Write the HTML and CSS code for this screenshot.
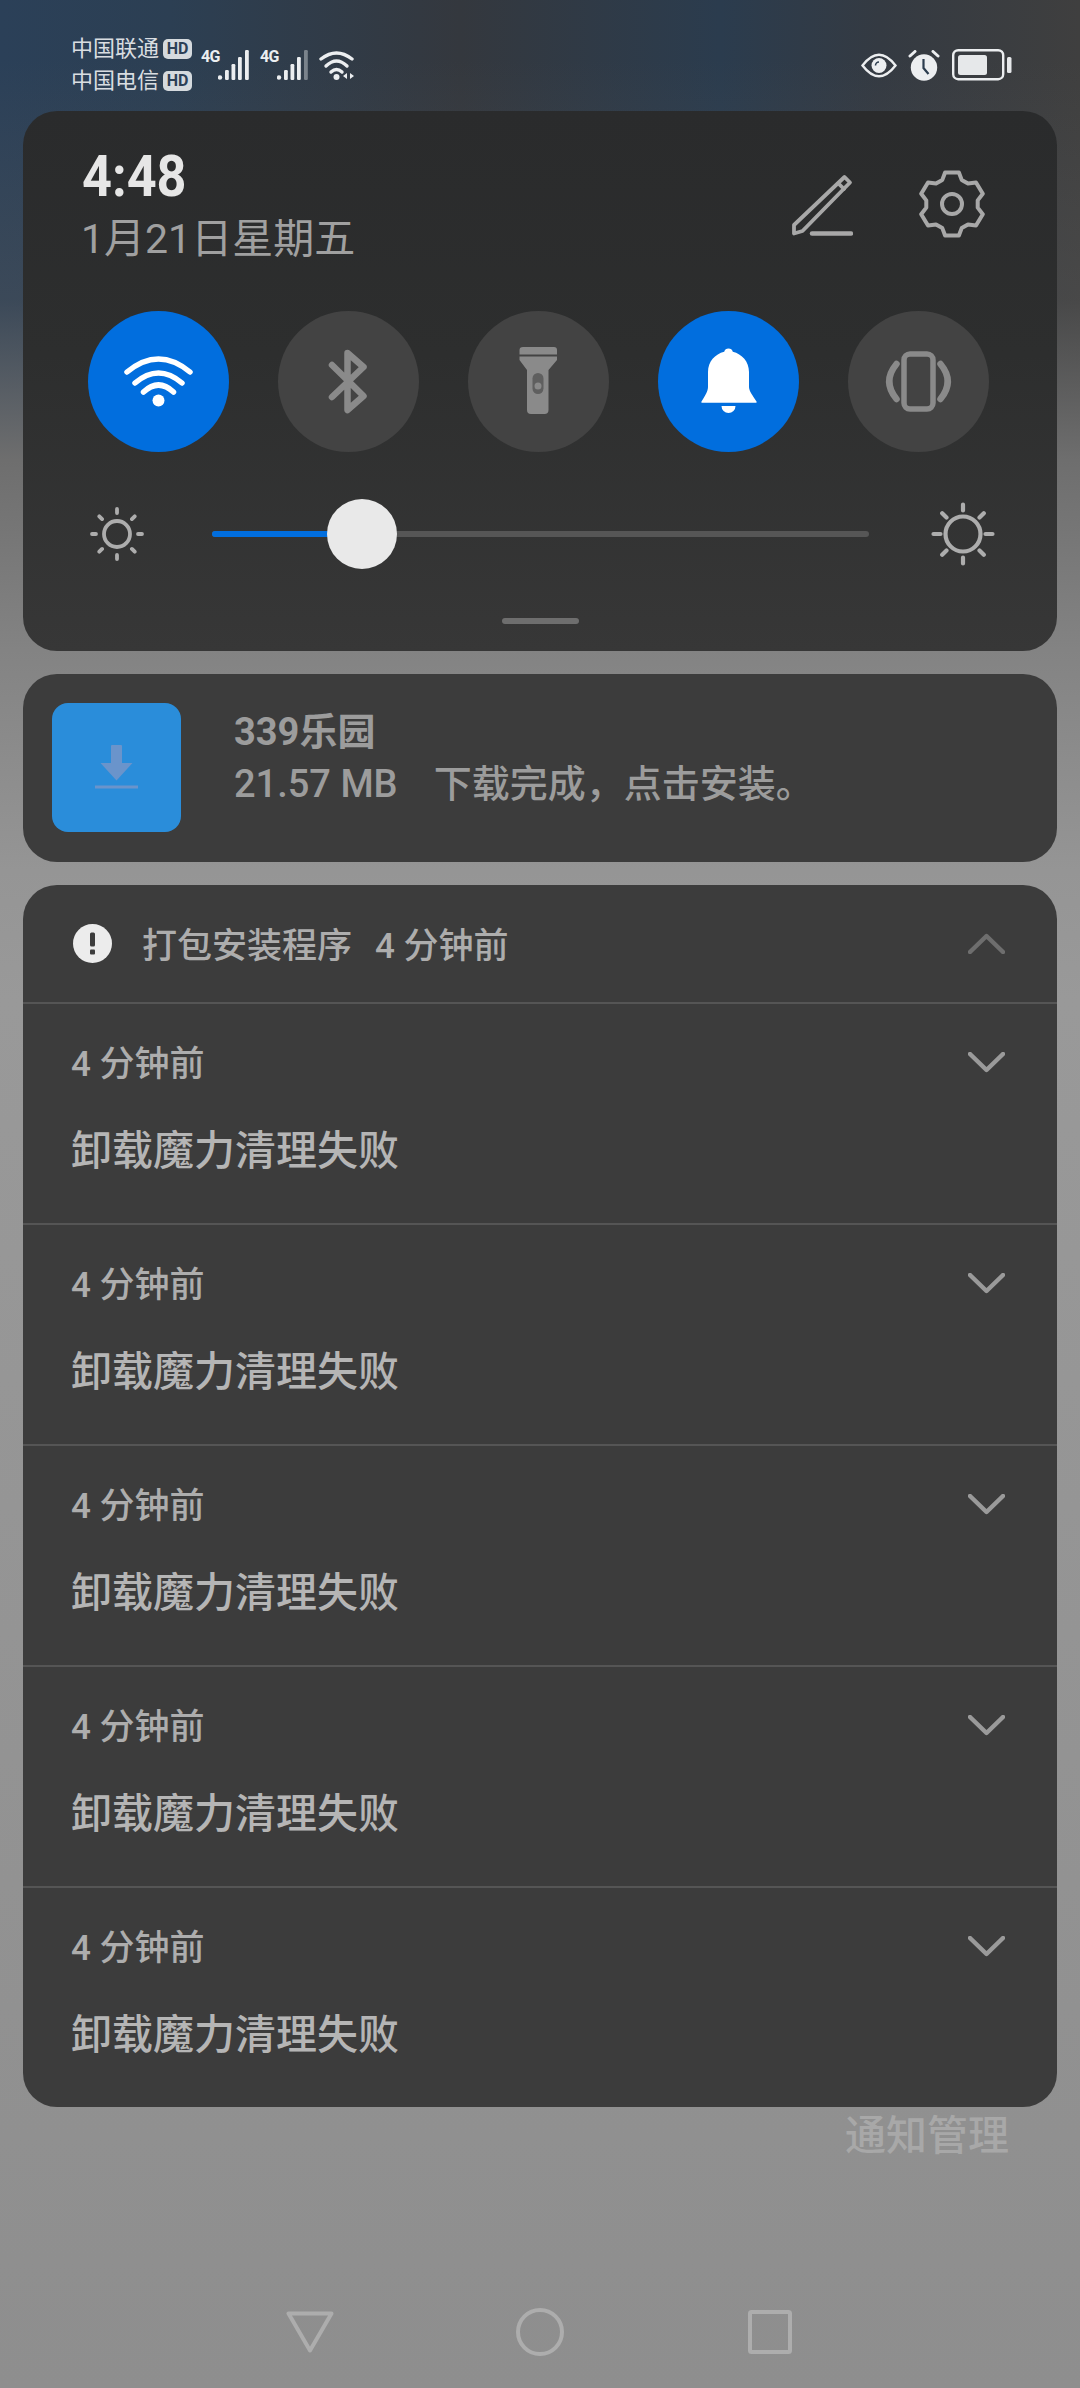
FILE: index.html

```html
<!DOCTYPE html>
<html lang="zh-CN">
<head>
  <meta charset="UTF-8" />
  <meta name="viewport" content="width=device-width, initial-scale=1.0"/>
  <title>通知中心</title>
  <link rel="stylesheet" href="styles.css">
</head>
<body>
  <div class="page">
    <div class="status">
      <div class="carriers">
        <div class="carrier">中国联通<span class="hd">HD</span></div>
        <div class="carrier">中国电信<span class="hd">HD</span></div>
      </div>
      <div class="net">
        <span class="net-label">4G</span>
        <svg class="bars" viewBox="0 0 31 30"><circle cx="2" cy="27.500" r="2.200"/><rect x="7" y="20" width="3.800" height="10" rx="1.200"/><rect x="13.500" y="14" width="3.800" height="16" rx="1.200"/><rect x="20" y="7" width="3.800" height="23" rx="1.200"/><rect x="27" y="0" width="3.800" height="30" rx="1.200"/></svg>
      </div>
      <div class="net">
        <span class="net-label">4G</span>
        <svg class="bars" viewBox="0 0 31 30"><circle cx="2" cy="27.500" r="2.200"/><rect x="7" y="20" width="3.800" height="10" rx="1.200"/><rect x="13.500" y="14" width="3.800" height="16" rx="1.200"/><rect x="20" y="7" width="3.800" height="23" rx="1.200"/><rect x="27" y="0" width="3.800" height="30" rx="1.200" opacity=".4"/></svg>
      </div>
      <svg class="wifi-small" viewBox="0 0 37 31" fill="none" stroke="#eceef0" stroke-width="3.400" stroke-linecap="round">
        <path d="M2 9Q17.500 -3 33 9"/><path d="M7 16Q17.500 6 28 16"/><path d="M12 22Q17.500 17 23 22"/>
        <circle cx="17.500" cy="27" r="3" fill="#eceef0" stroke="none"/>
        <path d="M28 23v6l-4-3zM31 23v6l4-3z" fill="#eceef0" stroke="none"/>
      </svg>
      <div class="status-right">
        <svg class="eye" viewBox="0 0 36 27" fill="none" stroke="#eceef0" stroke-width="2.400">
          <path d="M1.500 13.500Q18 -8 34.500 13.500Q18 35 1.500 13.500Z"/>
          <circle cx="18" cy="13.500" r="7.500" fill="#eceef0" stroke="none"/>
          <path d="M14.500 13.500a3.500 3.500 0 0 1 3.500-3.500" stroke="#2c3d4f" stroke-width="1.600"/>
        </svg>
        <svg class="alarm" viewBox="0 0 32 31" fill="none">
          <circle cx="16" cy="17.500" r="13.200" fill="#eceef0"/>
          <path d="M15.500 9v9l5 6" stroke="#2c3d4f" stroke-width="2.200"/>
          <path d="M2 6l5-4.500M30 6l-5-4.500" stroke="#eceef0" stroke-width="3" stroke-linecap="round"/>
        </svg>
        <svg class="battery" viewBox="0 0 60 32">
          <rect x="1.200" y="1.200" width="50" height="29" rx="5" fill="none" stroke="#eceef0" stroke-width="2.400"/>
          <rect x="6" y="6" width="29" height="20" rx="2.500" fill="#e6e8ea"/>
          <rect x="55" y="8" width="4.500" height="16" rx="1.500" fill="#e6e8ea"/>
        </svg>
      </div>
    </div>

    <div class="panel">
      <div class="panel-head">
        <div>
          <div class="clock">4:48</div>
          <div class="date">1月21日星期五</div>
        </div>
        <div class="panel-actions">
          <svg class="pencil" viewBox="0 0 62 62" fill="none" stroke="#a8a8a8" stroke-width="3.800" stroke-linejoin="round" stroke-linecap="round">
            <path d="M53.500 3L59 8.500L11.500 57L3 59.500L3 51Z"/>
            <path d="M47.500 9.500L53 15"/>
            <path d="M21 59.500H60" stroke-width="4.500"/>
          </svg>
          <svg class="gear" viewBox="0 0 66 68" fill="none" stroke="#a8a8a8" stroke-width="4" stroke-linejoin="round">
            <path d="M23.300 9.900L26.100 2.500H39.900L42.700 9.900L49 13.500L57 12.500L63.800 23.800L58.700 30.400V37.600L63.800 44.200L57 55.500L49 54.500L42.700 58.100L39.900 65.500H26.100L23.300 58.100L17 54.500L9 55.500L2.200 44.200L7.300 37.600V30.400L2.200 23.800L9 12.500L17 13.500Z"/>
            <circle cx="33" cy="34" r="10"/>
          </svg>
        </div>
      </div>

      <div class="toggles">
        <div class="toggle on">
          <svg viewBox="0 0 141 141" fill="none" stroke="#fff" stroke-width="5.500" stroke-linecap="round">
            <path d="M39 61Q70.500 35 102 61"/><path d="M47 72Q70.500 52 94 72"/><path d="M55.500 81Q70.500 67 85.500 81"/>
            <circle cx="70.500" cy="89.500" r="6" fill="#fff" stroke="none"/>
          </svg>
        </div>
        <div class="toggle">
          <svg viewBox="0 0 141 141" fill="none" stroke="#8a8a8a" stroke-width="6.500" stroke-linecap="round" stroke-linejoin="round">
            <path d="M54 54L85.500 85L69.500 99V42L85.500 56L54 86"/>
          </svg>
        </div>
        <div class="toggle">
          <svg viewBox="0 0 141 141">
            <path d="M55 36H86a3 3 0 0 1 3 3V43.500H51.500V39a3.500 3 0 0 1 3.500-3z" fill="#8a8a8a"/>
            <path d="M51.500 45.500H89V49L80.500 59V99a4 4 0 0 1-4 4H63a4 4 0 0 1-4-4V59L51.500 49z" fill="#8a8a8a"/>
            <rect x="64.500" y="62" width="11" height="21" rx="5.500" fill="#5f5f5f"/>
            <circle cx="70" cy="75" r="3.500" fill="#8a8a8a"/>
          </svg>
        </div>
        <div class="toggle on">
          <svg viewBox="0 0 141 141" fill="#fff">
            <path d="M70.500 37.500a4.500 4.500 0 0 1 4.300 3.200C84 43 91 50.500 91 61v15c0 4 4 9 7.500 14.500.4.700 0 1.300-.8 1.300H44.300c-.8 0-1.200-.6-.8-1.300C47 85 50 80 50 76V61c0-10.500 7-18 16.200-20.300a4.500 4.500 0 0 1 4.300-3.200z"/>
            <path d="M63.500 95h14a7 7 0 0 1-14 0z"/>
          </svg>
        </div>
        <div class="toggle">
          <svg viewBox="0 0 141 141" fill="none" stroke="#8a8a8a" stroke-width="5.500" stroke-linecap="round">
            <rect x="56" y="43" width="29" height="55" rx="6"/>
            <path d="M48.500 53Q34 70.500 48.500 88" stroke-width="6.500"/><path d="M92.500 53Q107 70.500 92.500 88" stroke-width="6.500"/>
          </svg>
        </div>
      </div>

      <div class="brightness">
        <svg class="sun-low" viewBox="0 0 54 54" fill="none" stroke="#adadad" stroke-width="3.800" stroke-linecap="round">
          <circle cx="27" cy="27" r="13"/>
          <path d="M27 2v4M27 48v4M2 27h4M48 27h4M9.300 9.300l2.800 2.800M41.900 41.900l2.800 2.800M9.300 44.700l2.800-2.800M41.900 12.100l2.800-2.800"/>
        </svg>
        <div class="track">
          <div class="track-fill" style="width: 22.8%"></div>
          <div class="thumb" style="left: 22.8%"></div>
        </div>
        <svg class="sun-high" viewBox="0 0 64 64" fill="none" stroke="#adadad" stroke-width="4.200" stroke-linecap="round">
          <circle cx="32" cy="32" r="17.500"/>
          <path d="M32 2.500v6M32 55.500v6M2.500 32h7M54.500 32h7M11.200 11.200l4.300 4.300M48.500 48.500l4.300 4.300M11.200 52.800l4.300-4.300M48.500 15.500l4.300-4.300"/>
        </svg>
      </div>
      <div class="handle"></div>
    </div>

    <div class="card download">
      <div class="app-icon">
        <svg viewBox="0 0 129 129" fill="#6a94cb">
          <path d="M60 42h9a1 1 0 0 1 1 1V60h10.500L64.500 77.500L48.500 60H59V43a1 1 0 0 1 1-1z"/>
          <rect x="43" y="82.500" width="43" height="3"/>
        </svg>
      </div>
      <div class="download-text">
        <div class="download-title">339乐园</div>
        <div class="download-sub"><span class="size">21.57 MB</span>下载完成，点击安装。</div>
      </div>
    </div>

    <div class="card group">
      <div class="group-head">
        <svg class="alert" viewBox="0 0 39 39">
          <circle cx="19.500" cy="19.500" r="19.500" fill="#ececec"/>
          <rect x="17" y="8.500" width="5" height="14" rx="1.500" fill="#3c3c3c"/>
          <rect x="17" y="25.500" width="5" height="5" rx="1" fill="#3c3c3c"/>
        </svg>
        <span class="group-title">打包安装程序</span>
        <span class="group-time">4 分钟前</span>
        <svg class="chevron dim" viewBox="0 0 37 21" fill="none"><path d="M2 19L18.500 3L35 19"/></svg>
      </div>

      <div class="item">
        <div class="item-top">
          <span class="item-time">4 分钟前</span>
          <svg class="chevron" viewBox="0 0 37 21" fill="none"><path d="M2 2L18.500 18L35 2"/></svg>
        </div>
        <div class="item-title">卸载魔力清理失败</div>
      </div>
      <div class="item">
        <div class="item-top">
          <span class="item-time">4 分钟前</span>
          <svg class="chevron" viewBox="0 0 37 21" fill="none"><path d="M2 2L18.500 18L35 2"/></svg>
        </div>
        <div class="item-title">卸载魔力清理失败</div>
      </div>
      <div class="item">
        <div class="item-top">
          <span class="item-time">4 分钟前</span>
          <svg class="chevron" viewBox="0 0 37 21" fill="none"><path d="M2 2L18.500 18L35 2"/></svg>
        </div>
        <div class="item-title">卸载魔力清理失败</div>
      </div>
      <div class="item">
        <div class="item-top">
          <span class="item-time">4 分钟前</span>
          <svg class="chevron" viewBox="0 0 37 21" fill="none"><path d="M2 2L18.500 18L35 2"/></svg>
        </div>
        <div class="item-title">卸载魔力清理失败</div>
      </div>
      <div class="item">
        <div class="item-top">
          <span class="item-time">4 分钟前</span>
          <svg class="chevron" viewBox="0 0 37 21" fill="none"><path d="M2 2L18.500 18L35 2"/></svg>
        </div>
        <div class="item-title">卸载魔力清理失败</div>
      </div>
    </div>

    <div class="manage">通知管理</div>

    <div class="nav">
      <svg viewBox="0 0 48 42" fill="none" stroke="#adadad" stroke-width="4" stroke-linejoin="round"><path d="M2.500 2.500H45.500L24 39.500Z"/></svg>
      <svg viewBox="0 0 48 48" fill="none" stroke="#adadad" stroke-width="4"><circle cx="24" cy="24" r="22"/></svg>
      <svg viewBox="0 0 44 44" fill="none" stroke="#adadad" stroke-width="4" stroke-linejoin="round"><rect x="2" y="2" width="40" height="40" rx="1.500"/></svg>
    </div>
  </div>
</body>
</html>
```

FILE: styles.css

```css
* {
  box-sizing: border-box;
}
body {
  margin: 0;
  font-family: Roboto, "Noto Sans CJK SC", sans-serif;
}
svg {
  display: block;
}
.page {
  width: 1080px;
  height: 2388px;
  overflow: hidden;
  display: flex;
  flex-direction: column;
  background:
    linear-gradient(180deg, rgba(110, 110, 110, 0) 60px, rgba(90, 90, 90, .35) 300px, #6e6e6e 460px, #838383 650px, #959595 870px, #999 1000px, #8e8e8e 2388px),
    linear-gradient(90deg, #2b4058 0, #2c3f53 170px, #34383e 460px, #2b3c4e 720px, #343a42 880px, #3f3f3f 1080px);
}

/* status bar */
.status {
  height: 111px;
  flex: none;
  display: flex;
  align-items: center;
  padding: 19px 68px 0 71px;
  color: #d9dde1;
}
.carrier {
  display: flex;
  align-items: center;
  height: 32px;
  font-size: 22px;
  line-height: 32px;
}
.hd {
  margin-left: 4px;
  width: 29px;
  height: 20px;
  border-radius: 5px;
  background: #d5dade;
  color: #2c4056;
  font-size: 16px;
  font-weight: 700;
  line-height: 20px;
  text-align: center;
}
.net {
  position: relative;
  width: 48px;
  margin-left: 9px;
  height: 30px;
}
.net + .net {
  margin-left: 11px;
}
.net-label {
  position: absolute;
  left: 0;
  top: -1px;
  font-size: 16px;
  font-weight: 700;
  line-height: 16px;
  letter-spacing: -.8px;
  color: #eceef0;
}
.bars {
  position: absolute;
  left: 17px;
  top: 0;
  width: 31px;
  height: 30px;
  fill: #eceef0;
}
.wifi-small {
  width: 37px;
  height: 31px;
  margin-left: 11px;
}
.status-right {
  margin-left: auto;
  display: flex;
  align-items: center;
}
.eye {
  width: 36px;
  height: 27px;
}
.alarm {
  width: 32px;
  height: 31px;
  margin-left: 11px;
}
.battery {
  width: 60px;
  height: 32px;
  margin-left: 12px;
}

/* quick settings */
.panel {
  flex: none;
  height: 540px;
  margin: 0 23px;
  padding-top: 35px;
  border-radius: 34px;
  background: linear-gradient(180deg, #2a2b2c 0, #2d2e2e 45%, #373737 100%);
}
.panel-head {
  display: flex;
  justify-content: space-between;
  height: 119px;
  padding: 0 72px 0 59px;
}
.clock {
  font-size: 58px;
  font-weight: 700;
  line-height: 60px;
  color: #e6e6e6;
  transform: scaleX(.9);
  transform-origin: left center;
}
.date {
  margin: 8px 0 0 -1px;
  font-size: 41px;
  line-height: 50px;
  color: #a0a0a0;
}
.panel-actions {
  display: flex;
  gap: 66px;
  padding-top: 24px;
}
.pencil {
  width: 62px;
  height: 62px;
  margin-top: 4px;
}
.gear {
  width: 66px;
  height: 68px;
}
.toggles {
  display: flex;
  gap: 49px;
  padding: 0 64.5px;
  margin-top: 46px;
}
.toggle {
  width: 141px;
  height: 141px;
  border-radius: 50%;
  background: #434343;
}
.toggle.on {
  background: #016ede;
}
.brightness {
  display: flex;
  align-items: center;
  gap: 68px;
  height: 70px;
  margin-top: 47px;
  padding: 0 62px 0 67px;
}
.sun-low {
  width: 54px;
  height: 54px;
  flex: none;
}
.sun-high {
  width: 64px;
  height: 64px;
  flex: none;
  margin-left: -6px;
}
.track {
  position: relative;
  flex: 1;
  height: 6px;
  border-radius: 3px;
  background: #565656;
}
.track-fill {
  height: 6px;
  border-radius: 3px;
  background: #016ede;
}
.thumb {
  position: absolute;
  top: -32px;
  width: 70px;
  height: 70px;
  margin-left: -35px;
  border-radius: 50%;
  background: #e9e9e9;
}
.handle {
  width: 77px;
  height: 6px;
  margin: 49px auto 0;
  border-radius: 3px;
  background: #6e6e6e;
}

/* cards */
.card {
  flex: none;
  margin: 23px 23px 0;
  border-radius: 34px;
  background: #3c3c3c;
}
.download {
  display: flex;
  gap: 53px;
  height: 188px;
  padding: 29px;
}
.app-icon {
  width: 129px;
  height: 129px;
  flex: none;
  border-radius: 16px;
  background: #2a8dda;
}
.download-text {
  padding-top: 4px;
  color: #9c9c9c;
  font-size: 38px;
  font-weight: 500;
  line-height: 50px;
}
.download-title {
  font-weight: 700;
}
.download-sub {
  margin-top: 2px;
}
.size {
  margin-right: 36px;
}
.group-head {
  display: flex;
  align-items: center;
  height: 117px;
  padding: 0 52px 2px 50px;
  font-size: 35px;
  font-weight: 500;
  color: #adadad;
}
.alert {
  width: 39px;
  height: 39px;
  margin-top: 2px;
  margin-right: 30px;
}
.group-time {
  margin-left: 23px;
}
.chevron {
  width: 37px;
  height: 21px;
  stroke: #9a9a9a;
  stroke-width: 4.500;
  stroke-linecap: round;
  stroke-linejoin: round;
}
.chevron.dim {
  margin-left: auto;
  margin-top: 2px;
  stroke: #6e6e6e;
}
.item {
  height: 221px;
  padding: 33px 52px 0 48px;
  border-top: 2px solid #555;
}
.item-top {
  display: flex;
  align-items: center;
  justify-content: space-between;
  height: 50px;
}
.item-time {
  margin-bottom: 4px;
  font-size: 35px;
  font-weight: 500;
  color: #adadad;
}
.item-title {
  margin-top: 34px;
  font-size: 41px;
  font-weight: 500;
  line-height: 60px;
  color: #b5b5b5;
}
.manage {
  flex: none;
  margin-top: 4px;
  padding-right: 71px;
  text-align: right;
  font-size: 41px;
  font-weight: 500;
  line-height: 50px;
  color: #a8a8a8;
}
.nav {
  margin-top: auto;
  margin-bottom: 32px;
  display: grid;
  grid-template-columns: repeat(3, 230px);
  justify-content: center;
  justify-items: center;
  align-items: center;
}
.nav svg:nth-child(1) {
  width: 48px;
  height: 42px;
}
.nav svg:nth-child(2) {
  width: 48px;
  height: 48px;
}
.nav svg:nth-child(3) {
  width: 44px;
  height: 44px;
}
```
